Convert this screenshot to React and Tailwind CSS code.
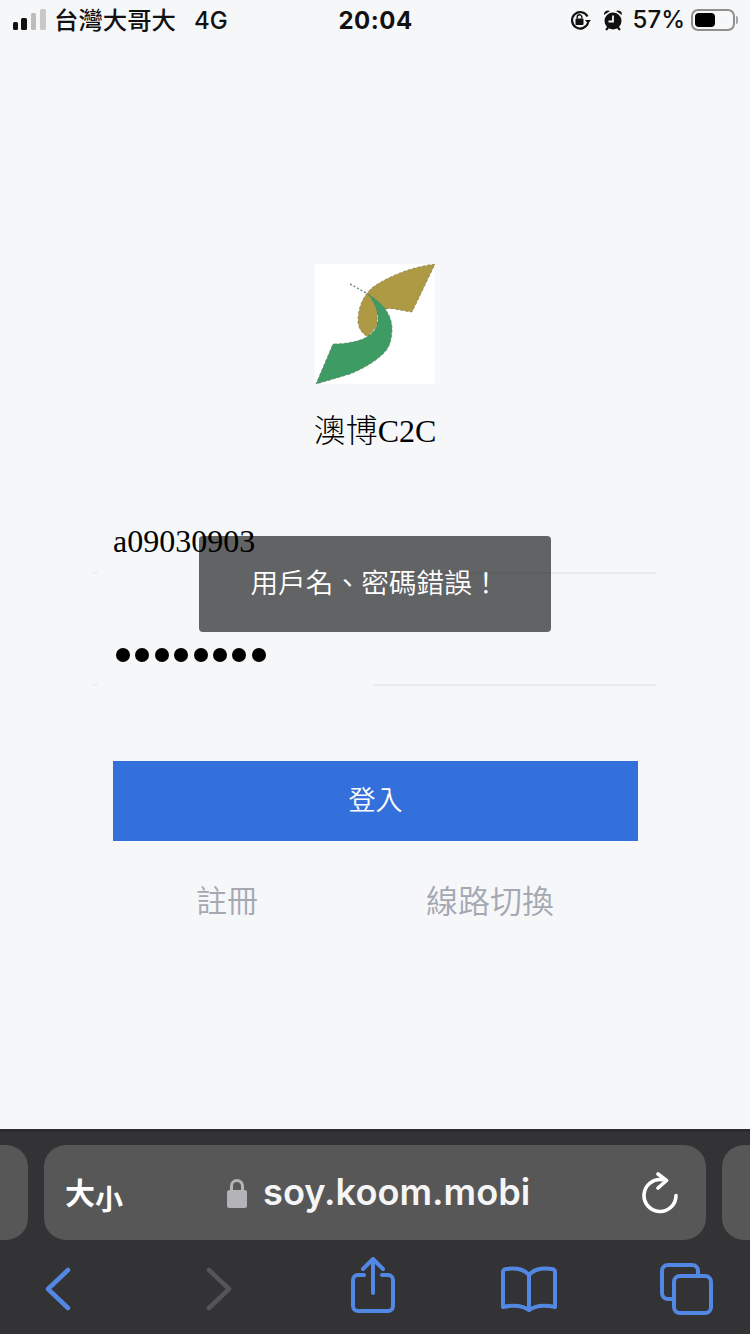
const cjk = "font-['Noto_Sans_CJK_TC',sans-serif]";

function StatusBar() {
  return (
    <div className="h-[40px] flex items-center justify-between pl-[13px] pr-[12px] font-['Inter','Noto_Sans_CJK_TC',sans-serif] text-[#111]">
      <div className="flex items-center w-[300px]">
        <svg width="34" height="22" viewBox="0 0 34 22" className="shrink-0 mt-[-1px]">
          <rect x="0" y="13" width="5" height="8" rx="1.5" fill="#111" />
          <rect x="8" y="9" width="6" height="12" rx="1.5" fill="#111" />
          <rect x="18" y="4" width="5" height="17" rx="1.5" fill="#bdbdbd" />
          <rect x="27" y="0" width="6" height="21" rx="1.5" fill="#c9c9c9" />
        </svg>
        <span className={`ml-[7px] mt-[-2px] text-[24.4px] leading-none font-medium ${cjk}`}>台灣大哥大</span>
        <span className="ml-[18px] mt-[1px] text-[24px] leading-none font-medium">4G</span>
      </div>
      <div className="text-[24px] leading-none font-bold tracking-[0.5px] mt-[1px]">20:04</div>
      <div className="flex items-center w-[300px] justify-end">
        <svg width="23" height="22" viewBox="0 0 23 22" className="shrink-0">
          <path d="M18.5 7.5A8.2 8.2 0 1 0 19 14" fill="none" stroke="#111" strokeWidth="2.2" />
          <path d="M16 11h6l-3 3.8z" fill="#111" />
          <rect x="6.5" y="9.5" width="8" height="6.5" rx="1" fill="#111" />
          <path d="M8.2 9.5V8a2.3 2.3 0 0 1 4.6 0v1.5" fill="none" stroke="#111" strokeWidth="1.4" />
        </svg>
        <svg width="22" height="24" viewBox="0 0 22 24" className="ml-[10px] shrink-0">
          <circle cx="11" cy="13" r="8.5" fill="#111" />
          <path d="M2 7a4 4 0 0 1 6-4zM20 7a4 4 0 0 0-6-4z" fill="#111" />
          <path d="M4 22l2.5-3M18 22l-2.5-3" stroke="#111" strokeWidth="2" />
          <path d="M11 7.5V13.5H6.5" fill="none" stroke="#f6f7f9" strokeWidth="1.8" />
        </svg>
        <span className="ml-[9px] text-[24px] leading-none font-medium">57%</span>
        <div className="ml-[6px] w-[44px] h-[22px] rounded-[7px] border-2 border-[#8f8f8f] p-[2px] flex">
          <div className="w-[20px] rounded-[4px] bg-black" />
        </div>
        <div className="ml-[1px] w-[2px] h-[8px] rounded-r bg-[#a5a5a5]" />
      </div>
    </div>
  );
}

function Logo() {
  return (
    <svg width="120" height="120" viewBox="0 0 120 120" className="bg-white shrink-0">
      <path d="M120 0Q85 5 58 23Q43 36 43 58Q44 68 53 73L63 60Q60 50 65 48Q72 43 80 45Q90 47 97 48Z" fill="#ae9945" stroke="#7d7440" strokeWidth="0.7" strokeDasharray="3 2" />
      <path d="M35 20L53 30" stroke="#6f8f80" strokeWidth="1.5" strokeDasharray="2 2" />
      <path d="M53 30Q77 45 77 65Q77 82 68 90Q55 102 35 110Q15 116 1 120L18 80Q35 80 48 75Q63 68 63 55Q63 42 53 30Z" fill="#3d9b63" stroke="#4f7f5f" strokeWidth="0.7" strokeDasharray="3 2" />
    </svg>
  );
}

function Rule() {
  return (
    <div className="w-[563px] h-[2px] flex justify-between">
      <div className="w-[5px] bg-[#eeeff1]" />
      <div className="w-[283px] bg-[#e9eaec]" />
    </div>
  );
}

function Main() {
  return (
    <div className="relative flex-1 flex flex-col items-center pt-[224px]">
      <Logo />
      <h1 className="mt-[26px] text-[32px] leading-[42px] font-light text-black font-['Liberation_Serif','Noto_Sans_CJK_TC',serif]">
        澳博C2C
      </h1>
      <div className="mt-[62px] w-[563px] ml-[-1px] flex flex-col">
        <div className="h-[58px] pl-[20px] text-[32px] leading-[42px] pt-[6px] text-black font-['Liberation_Serif',serif]">a09030903</div>
        <Rule />
        <div className="h-[110px] pl-[23px] pt-[74px] flex gap-[5.4px]">
          {[0, 1, 2, 3, 4, 5, 6, 7].map((i) => (
            <span key={i} className="w-[14px] h-[14px] rounded-full bg-black" />
          ))}
        </div>
        <Rule />
      </div>
      <button className={`mt-[75px] ml-[1px] w-[525px] h-[80px] pb-[4px] bg-[#3470dc] text-white text-[27px] font-[350] ${cjk}`}>登入</button>
      <div className={`mt-[35px] w-[525px] ml-[1px] flex text-[#a4a8b2] text-[31px] leading-[46px] font-[350] ${cjk}`}>
        <span className="ml-[83px]">註冊</span>
        <span className="ml-[168px] text-[32px]">線路切換</span>
      </div>
      <div className={`absolute left-[199px] top-[496px] w-[352px] h-[96px] pb-[5px] rounded-[4px] bg-black/60 flex items-center justify-center text-white text-[27.7px] font-[350] ${cjk}`}>
        用戶名、密碼錯誤！
      </div>
    </div>
  );
}

function Toolbar() {
  const blue = "#5288e4";
  return (
    <div className="h-[205px] bg-[#333335] border-t-[3px] border-[#2c2c2e] font-['Inter','Noto_Sans_CJK_TC',sans-serif]">
      <div className="flex gap-[16px] pt-[13px] h-[108px]">
        <div className="w-[28px] h-[95px] rounded-r-[22px] bg-[#575757]" />
        <div className="w-[662px] h-[95px] rounded-[22px] bg-[#575757] flex items-center pl-[21px] pr-[28px] text-white">
          <span className={`font-bold text-[30px] leading-none mb-[4px] ${cjk}`}>大</span>
          <span className={`font-bold text-[28px] leading-none mt-[10px] ${cjk}`}>小</span>
          <svg width="20" height="30" viewBox="0 0 20 30" className="ml-[104px] shrink-0">
            <path d="M4.5 13V8a5.5 5.5 0 0 1 11 0v5" fill="none" stroke="#b4b4b8" strokeWidth="3" />
            <rect x="0" y="12" width="20" height="18" rx="2.5" fill="#b4b4b8" />
          </svg>
          <span className="ml-[16px] text-[36.2px] leading-none font-semibold text-[#f5f5f5] w-[330px]">soy.koom.mobi</span>
          <svg width="36" height="42" viewBox="0 0 36 42" className="ml-auto shrink-0">
            <path d="M20 7.6A16 16 0 1 0 34 23.5" fill="none" stroke="#fff" strokeWidth="3.6" strokeLinecap="round" />
            <path d="M16 2L24.5 8.5L16 16" fill="none" stroke="#fff" strokeWidth="3.6" strokeLinecap="round" strokeLinejoin="round" />
          </svg>
        </div>
        <div className="w-[28px] h-[95px] rounded-l-[22px] bg-[#575757]" />
      </div>
      <div className="flex items-center h-[94px] pl-[45px] pt-[3px]">
        <svg width="26" height="44" viewBox="0 0 26 44" className="shrink-0">
          <path d="M23 3L3 22l20 19" fill="none" stroke={blue} strokeWidth="4.5" strokeLinecap="round" strokeLinejoin="round" />
        </svg>
        <svg width="26" height="44" viewBox="0 0 26 44" className="ml-[135px] shrink-0">
          <path d="M3 3l20 19L3 41" fill="none" stroke="#555557" strokeWidth="4.5" strokeLinecap="round" strokeLinejoin="round" />
        </svg>
        <svg width="44" height="56" viewBox="0 0 44 56" className="ml-[119px] shrink-0 mt-[-7px]">
          <path d="M13 18H7a5 5 0 0 0-5 5v26a5 5 0 0 0 5 5h30a5 5 0 0 0 5-5V23a5 5 0 0 0-5-5h-6" fill="none" stroke={blue} strokeWidth="4" strokeLinecap="round" />
          <path d="M22 36V3M12 12l10-10 10 10" fill="none" stroke={blue} strokeWidth="4" strokeLinecap="round" strokeLinejoin="round" />
        </svg>
        <svg width="56" height="46" viewBox="0 0 56 46" className="ml-[106px] shrink-0">
          <path d="M28 9C23 3 13 2 5 3a3 3 0 0 0-3 3v35c9-2 19-2 26 3 7-5 17-5 26-3V6a3 3 0 0 0-3-3c-8-1-18 0-23 6Zm0 0v34" fill="none" stroke={blue} strokeWidth="4" strokeLinejoin="round" />
        </svg>
        <svg width="54" height="52" viewBox="0 0 54 52" className="ml-[103px] shrink-0">
          <path d="M12 36H8a6 6 0 0 1-6-6V8a6 6 0 0 1 6-6h24a6 6 0 0 1 6 6v4" fill="none" stroke={blue} strokeWidth="4" />
          <rect x="14" y="13" width="37" height="37" rx="6" fill="none" stroke={blue} strokeWidth="4" />
        </svg>
      </div>
    </div>
  );
}

export default function App() {
  return (
    <div className="w-[750px] h-[1334px] overflow-hidden flex flex-col bg-[#f6f7f9]">
      <StatusBar />
      <Main />
      <Toolbar />
    </div>
  );
}
